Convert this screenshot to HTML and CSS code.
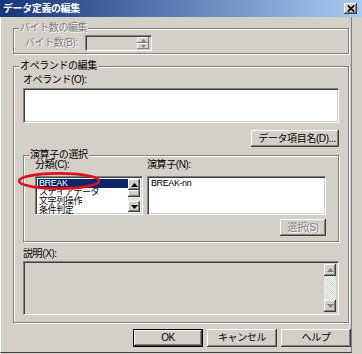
FILE: index.html
```html
<!DOCTYPE html>
<html lang="ja">
<head>
    <meta charset="UTF-8">
    <meta name="viewport" content="width=device-width, initial-scale=1.0">
    <title>データ定義の編集</title>
    <link rel="stylesheet" href="styles.css">
</head>
<body>
    <div class="window">
        <div class="titlebar">
            <span class="title">データ定義の編集</span>
            <span class="close-btn">
                <svg width="8" height="7" viewBox="0 0 8 7"><path d="M0.8 0.5 L7.2 6.5 M7.2 0.5 L0.8 6.5" stroke="#000" stroke-width="1.7" fill="none"/></svg>
            </span>
        </div>
        <div class="client">
            <div class="group group-bytes">
                <div class="legend disabled-text">バイト数の編集</div>
                <div class="bytes-row">
                    <span class="label bytes-label disabled-text">バイト数(B):</span>
                    <div class="sunken spin">
                        <div class="spin-buttons">
                            <span class="spin-btn"><svg width="5" height="3" viewBox="0 0 5 3"><path d="M2.5 0 L5 3 L0 3Z" fill="#808080"/></svg></span>
                            <span class="spin-btn"><svg width="5" height="3" viewBox="0 0 5 3"><path d="M0 0 L5 0 L2.5 3Z" fill="#808080"/></svg></span>
                        </div>
                    </div>
                </div>
            </div>

            <div class="group group-operand">
                <div class="legend">オペランドの編集</div>
                <div class="label operand-label">オペランド(O):</div>
                <div class="sunken operand-field"></div>
                <div class="item-row">
                    <button class="btn item-btn">データ項目名(D)...</button>
                </div>

                <div class="group group-op">
                    <div class="legend">演算子の選択</div>
                    <div class="op-columns">
                        <div class="cat-col">
                            <div class="label">分類(C):</div>
                            <div class="sunken listbox cat-list">
                                <ul class="list-items">
                                    <li class="selected">BREAK</li>
                                    <li>ステイアデータ</li>
                                    <li>文字列操作</li>
                                    <li>条件判定</li>
                                </ul>
                                <div class="vscroll">
                                    <span class="scroll-btn"><svg width="7" height="4" viewBox="0 0 7 4"><path d="M3.5 0 L7 4 L0 4Z"/></svg></span>
                                    <span class="scroll-btn thumb"></span>
                                    <span class="scroll-track"></span>
                                    <span class="scroll-btn"><svg width="7" height="4" viewBox="0 0 7 4"><path d="M0 0 L7 0 L3.5 4Z"/></svg></span>
                                </div>
                            </div>
                        </div>
                        <div class="name-col">
                            <div class="label">演算子(N):</div>
                            <div class="sunken listbox name-list">
                                <ul class="list-items">
                                    <li>BREAK-nn</li>
                                </ul>
                            </div>
                            <div class="select-row">
                                <button class="btn select-btn" disabled>選択(S)</button>
                            </div>
                        </div>
                    </div>
                </div>

                <div class="label desc-label">説明(X):</div>
                <div class="sunken desc-field">
                    <div class="vscroll">
                        <span class="scroll-btn tall"><svg width="7" height="4" viewBox="0 0 7 4"><path d="M3.5 0 L7 4 L0 4Z" fill="#808080"/></svg></span>
                        <span class="scroll-track"></span>
                        <span class="scroll-btn tall"><svg width="7" height="4" viewBox="0 0 7 4"><path d="M0 0 L7 0 L3.5 4Z" fill="#808080"/></svg></span>
                    </div>
                </div>
            </div>

            <div class="dialog-buttons">
                <button class="btn default">OK</button>
                <button class="btn">キャンセル</button>
                <button class="btn">ヘルプ</button>
            </div>
        </div>

        <svg class="mark" width="84" height="20" viewBox="0 0 84 20">
            <ellipse cx="42" cy="10" rx="40" ry="7.6" fill="none" stroke="#e0101a" stroke-width="2.6"/>
        </svg>
    </div>
</body>
</html>
```

FILE: styles.css
```css
body {
    margin: 0;
    background-color: #d4d0c8;
    font-family: "Liberation Sans", "Noto Sans CJK JP", sans-serif;
    font-size: 10px;
    letter-spacing: -0.4px;
    color: #000;
}
.window {
    position: relative;
    width: 362px;
    height: 354px;
    overflow: hidden;
}
.titlebar {
    height: 17px;
    display: flex;
    align-items: center;
    justify-content: space-between;
    padding: 0 5px 0 3px;
    background: linear-gradient(to right, #16357a, #a8cbf2);
}
.title {
    color: #fff;
    font-weight: bold;
    line-height: 12px;
}
.close-btn {
    width: 13px;
    height: 11px;
    display: flex;
    align-items: center;
    justify-content: center;
    background-color: #d4d0c8;
    box-shadow: inset -1px -1px #404040, inset 1px 1px #fff, inset -2px -2px #808080;
}
.client {
    box-sizing: border-box;
    width: 352px;
    height: 336px;
    border-left: 1px solid #fff;
    border-right: 1px solid #808080;
    border-bottom: 1px solid #404040;
    padding: 11px 0 0 12px;
}
.group {
    box-sizing: border-box;
    border: 1px solid #808080;
    box-shadow: inset 1px 1px #fff, 1px 1px #fff;
    padding: 0 9px;
}
.legend {
    width: fit-content;
    margin: -7px 0 0 -4px;
    padding: 0 1px;
    line-height: 12px;
    background-color: #d4d0c8;
}
.label {
    line-height: 12px;
}
.disabled-text {
    color: #808080;
    text-shadow: 1px 1px 0 #fff;
}
.sunken {
    box-sizing: border-box;
    border: 1px solid;
    border-color: #808080 #fff #fff #808080;
    box-shadow: inset 1px 1px #404040, inset -1px -1px #d4d0c8;
    background-color: #fff;
}

/* byte count */
.group-bytes {
    width: 336px;
    height: 26px;
}
.bytes-row {
    display: flex;
    align-items: center;
    margin-top: 1px;
    height: 16px;
}
.bytes-label {
    width: 60px;
    margin-left: 2px;
}
.spin {
    width: 67px;
    height: 16px;
    background-color: #d4d0c8;
    display: flex;
    justify-content: flex-end;
    padding: 1px 2px 1px 0;
}
.spin-buttons {
    display: flex;
    flex-direction: column;
    width: 12px;
}
.spin-btn {
    flex: 1;
    display: flex;
    align-items: center;
    justify-content: center;
    box-shadow: inset -1px -1px #808080, inset 1px 1px #fff;
}

/* operand */
.group-operand {
    width: 336px;
    height: 257px;
    margin-top: 12px;
}
.operand-label {
    margin-top: 2px;
}
.operand-field {
    height: 35px;
    margin-top: 2px;
}
.item-row {
    display: flex;
    justify-content: flex-end;
    margin-top: 7px;
}
.btn {
    box-sizing: border-box;
    font: inherit;
    letter-spacing: inherit;
    color: #000;
    background-color: #d4d0c8;
    border: none;
    padding: 0;
    line-height: 12px;
    box-shadow: inset -1px -1px #404040, inset 1px 1px #fff, inset -2px -2px #808080;
}
.btn.default {
    box-shadow: inset 0 0 0 1px #000, inset -2px -2px #404040, inset 2px 2px #fff, inset -3px -3px #808080;
}
.btn:disabled {
    color: #808080;
    text-shadow: 1px 1px 0 #fff;
}
.item-btn {
    width: 88px;
    height: 17px;
    padding-left: 4px;
    white-space: nowrap;
    overflow: hidden;
}

/* operator select */
.group-op {
    width: 316px;
    height: 87px;
    margin-top: 8px;
}
.op-columns {
    display: flex;
    gap: 4px;
    margin-top: -2px;
    padding-left: 2px;
}
.cat-col {
    width: 108px;
}
.name-col {
    width: 179px;
}
.listbox {
    height: 39px;
    margin-top: 5px;
    padding: 2px;
    display: flex;
    overflow: hidden;
}
.list-items {
    flex: 1;
    list-style: none;
    margin: 0;
    padding: 0;
}
.list-items li {
    font-size: 9px;
    line-height: 9px;
    height: 9px;
    padding-left: 1px;
    white-space: nowrap;
}
.list-items li.selected {
    background-color: #0a246a;
    color: #fff;
}
.vscroll {
    width: 12px;
    display: flex;
    flex-direction: column;
}
.scroll-btn {
    height: 11px;
    display: flex;
    align-items: center;
    justify-content: center;
    background-color: #d4d0c8;
    box-shadow: inset -1px -1px #404040, inset 1px 1px #fff, inset -2px -2px #808080;
}
.scroll-btn.thumb {
    height: 7px;
}
.scroll-btn.tall {
    height: 12px;
}
.scroll-track {
    flex: 1;
    background: repeating-conic-gradient(#fff 0 25%, #d4d0c8 0 50%) 0 0 / 2px 2px;
}
.select-row {
    display: flex;
    justify-content: flex-end;
    margin-top: 4px;
}
.select-btn {
    width: 46px;
    height: 17px;
}

/* description */
.desc-label {
    margin-top: 6px;
}
.desc-field {
    height: 54px;
    margin-top: 1px;
    padding: 2px;
    background-color: #d4d0c8;
    display: flex;
    justify-content: flex-end;
}

.dialog-buttons {
    display: flex;
    justify-content: flex-end;
    gap: 4px;
    margin-top: 6px;
}
.dialog-buttons .btn {
    width: 70px;
    height: 18px;
}

.mark {
    position: absolute;
    left: 17px;
    top: 171px;
}
```
